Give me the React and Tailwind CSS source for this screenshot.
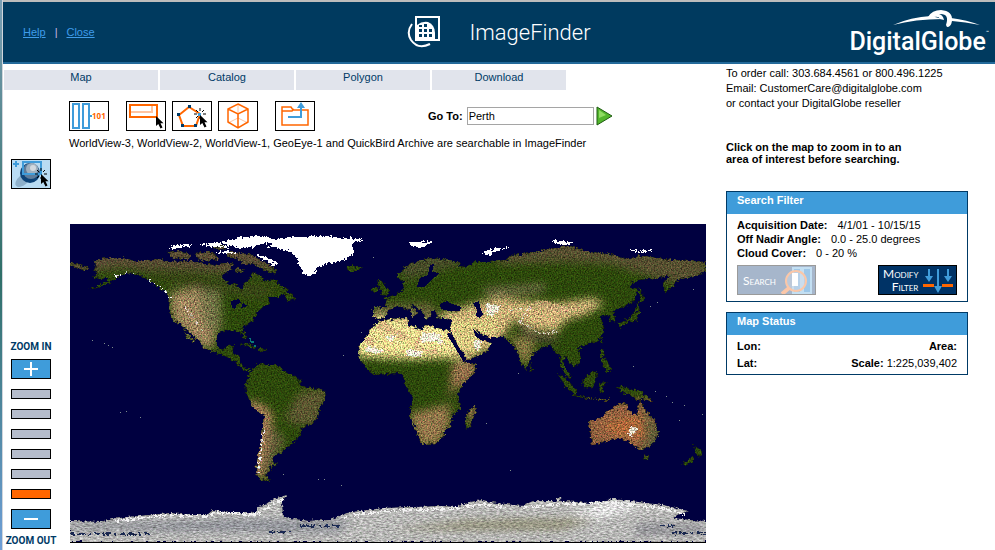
import { useState } from 'react';

const tabs = ['Map', 'Catalog', 'Polygon', 'Download'];

const LAND = {
  northAmerica:
    'M93 270L97 267L94 261L100 259L110 258L123 258L135 261L147 261L160 259L173 262L193 261L203 264L213 265L227 263L234 264L230 270L222 275L223 280L230 284L237 285L241 291L244 288L244 282L250 280L252 273L260 275L264 282L273 279L280 285L288 290L286 293L277 297L268 297L270 303L263 307L257 312L253 320L243 327L242 330L247 337L245 339L240 332L227 330L217 333L217 347L223 351L227 346L234 345L232 353L240 357L240 363L245 368L252 368L250 371L243 370L237 363L227 357L217 353L203 348L200 342L188 330L183 327L173 320L169 310L170 297L160 288L148 280L140 275L130 273L120 275L115 280L100 287L88 290L104 283L109 279L100 279L93 277L98 273Z',
  southAmerica:
    'M252 370L260 363L266 365L277 365L287 373L299 379L301 386L307 387L318 389L325 392L326 398L320 407L318 417L313 423L303 427L298 438L290 445L282 452L273 457L273 462L277 464L270 466L271 470L266 473L267 478L271 481L260 480L256 472L258 455L262 438L264 415L253 407L247 395L245 385L248 377Z',
  eurasia:
    'M373 307L385 307L387 300L384 298L395 295L403 290L404 282L398 278L398 273L406 267L413 263L430 258L447 260L462 263L457 266L466 267L474 262L490 262L507 260L512 255L533 253L545 250L557 248L570 246L587 252L600 253L613 255L625 259L643 256L670 260L706 262L706 272L690 277L677 280L674 285L665 292L663 283L672 275L657 278L637 280L628 287L638 290L633 302L623 307L612 312L616 320L612 322L608 315L600 317L603 323L604 333L597 342L585 345L577 347L581 357L580 363L573 367L568 360L565 356L563 363L567 370L572 378L567 377L561 366L560 355L555 353L552 345L543 347L532 355L530 363L525 369L520 360L516 348L510 342L503 337L490 337L482 334L477 330L476 332L480 338L491 343L487 352L467 360L463 353L452 335L450 328L453 320L437 317L436 311L432 311L431 315L427 320L422 312L413 304L410 304L418 313L412 317L412 312L403 307L395 307L388 310L387 315L380 319L373 317Z',
  africa:
    'M380 322L390 319L407 318L408 325L422 330L425 325L436 328L448 330L453 343L463 360L467 364L478 363L473 375L462 385L458 395L460 408L452 417L450 427L445 430L443 437L437 443L422 444L417 433L410 415L413 398L405 385L403 375L397 373L385 374L375 375L365 367L358 355L360 343L370 333L372 327Z',
  australia:
    'M589 422L603 417L605 413L613 408L620 403L628 404L627 410L637 415L639 405L641 400L643 408L653 418L659 432L653 445L640 450L633 445L627 440L617 438L603 442L592 445L590 428Z',
};

const ISLANDS = [
  'M475 405L476 410L470 428L465 427L467 413Z',
  'M374 287L378 287L377 292L371 291Z',
  'M377 280L382 281L385 287L390 291L389 294L380 296L382 291L379 287Z',
  'M345 267L352 266L363 268L358 271L349 271Z',
  'M644 456L649 455L648 460L645 459Z',
  'M694 445L699 449L703 451L699 457L696 454Z',
  'M693 457L695 460L685 466L682 464Z',
  'M617 386L627 388L640 391L647 396L653 402L642 399L636 400L630 395L623 393Z',
  'M582 380L590 374L597 371L596 380L592 388L584 387Z',
  'M557 373L563 376L571 384L577 391L575 394L566 387Z',
  'M574 394L583 397L597 399L610 399L609 401L589 399L574 396Z',
  'M599 383L607 382L602 386L604 392L600 393Z',
  'M601 349L604 350L603 357L608 363L612 370L607 372L604 366L601 359Z',
  'M639 287L642 293L643 300L638 303L640 312L637 320L628 322L620 327L617 324L630 318L636 311L637 303L641 299L639 293Z',
  'M530 364L533 369L531 372L529 369Z',
  'M580 347L583 347L582 350L579 350Z',
  'M602 339L603 340L602 344L600 343Z',
  'M240 344L248 343L257 348L255 349L246 346Z',
  'M259 348L267 349L266 352L259 351Z',
  'M183 328L187 334L195 341L193 342L186 336Z',
  'M285 293L291 293L295 299L289 301L286 298Z',
  'M70 262L78 265L88 267L85 270L76 268L70 266Z',
  'M168 252L178 251L192 255L188 259L172 258Z',
  'M194 253L206 252L215 254L218 259L204 261L197 258Z',
  'M213 247L222 245L226 248L217 250Z',
  'M226 252L240 253L252 255L262 261L272 266L277 272L270 273L262 268L252 263L244 264L236 258L227 257Z',
  'M235 268L244 270L241 272L235 271Z',
];

const ICE = [
  'M270 240L290 237L330 236L340 238L365 239L352 243L354 252L348 258L337 262L325 264L318 267L313 275L305 275L300 268L297 258L290 252L281 249L270 247L264 247L273 245Z',
  'M220 241L234 240L238 237L262 236L280 240L273 243L262 244L254 247L240 248L232 246L223 244Z',
  'M171 246L188 244L193 246L180 248L172 249Z',
  'M198 244L218 243L231 248L215 247Z',
  'M213 252L228 251L236 254L226 254Z',
  'M257 254L266 257L278 264L274 266L266 261L258 257Z',
  'M407 242L423 242L434 242L427 245L420 248L412 245Z',
  'M551 240L563 241L575 244L565 245L554 243Z',
  'M480 254L490 250L510 247L497 251L489 255Z',
  'M630 250L655 250L643 252L630 251Z',
];

const ANTARCTICA =
  'M70 521L100 522L113 519L127 517L150 515L170 513L190 515L207 515L213 510L230 513L250 513L257 512L257 506L265 505L270 501L277 498L288 495L282 502L283 517L307 521L330 520L347 513L360 511L383 508L413 507L443 506L455 507L470 502L483 500L490 502L505 504L522 506L533 501L555 501L558 498L562 501L590 503L613 499L637 502L663 505L688 511L678 515L673 518L690 520L706 521L706 542L70 542Z';

const SPECKS = [
  [92, 340], [104, 343], [108, 345], [112, 347], [120, 412], [126, 411], [140, 417], [361, 332],
  [373, 257], [324, 479], [341, 485], [510, 470], [283, 474], [318, 479], [655, 391], [666, 396],
  [672, 402], [679, 420], [684, 405], [702, 414], [486, 423], [518, 373], [633, 366], [693, 289],
  [650, 306], [657, 302], [343, 355],
];

function WorldMap() {
  return (
    <svg viewBox="70 224 636 319" className="block w-full cursor-crosshair" role="img" aria-label="World map" shapeRendering="crispEdges">
      <defs>
        <clipPath id="land">
          <path d={LAND.northAmerica} />
          <path d={LAND.southAmerica} />
          <path d={LAND.eurasia} />
          <path d={LAND.africa} />
          <path d={LAND.australia} />
          {ISLANDS.map((d) => <path key={d} d={d} />)}
        </clipPath>
        <clipPath id="pole">
          <path d={ANTARCTICA} />
        </clipPath>
        <filter id="soft" x="-30%" y="-30%" width="160%" height="160%">
          <feGaussianBlur stdDeviation="4" />
        </filter>
        {/* ragged coast plus per pixel grain */}
        <filter id="grain" filterUnits="userSpaceOnUse" x="70" y="224" width="636" height="319" colorInterpolationFilters="sRGB">
          <feTurbulence type="fractalNoise" baseFrequency="0.35" numOctaves="2" seed="4" result="coast" />
          <feDisplacementMap in="SourceGraphic" in2="coast" scale="6" xChannelSelector="R" yChannelSelector="G" result="shape" />
          <feTurbulence type="fractalNoise" baseFrequency="0.7" numOctaves="3" seed="9" />
          <feColorMatrix values="1 0.5 0 0 -0.25  1 0 0.5 0 -0.25  1 0.3 0.2 0 -0.25  0 0 0 0 1" result="noise" />
          <feComposite in="shape" in2="noise" operator="arithmetic" k1="1.3" k2="0.3" k3="0" k4="0" />
        </filter>
        <filter id="snow" filterUnits="userSpaceOnUse" x="70" y="224" width="636" height="319" colorInterpolationFilters="sRGB">
          <feTurbulence type="fractalNoise" baseFrequency="0.35" numOctaves="2" seed="4" result="coast" />
          <feDisplacementMap in="SourceGraphic" in2="coast" scale="5" xChannelSelector="R" yChannelSelector="G" result="shape" />
          <feTurbulence type="fractalNoise" baseFrequency="0.3 0.7" numOctaves="3" seed="7" />
          <feColorMatrix values="0.9 0.1 0 0 0  0.9 0 0.1 0 0  0.9 0.1 0 0 0  0 0 0 0 1" result="noise" />
          <feComposite in="shape" in2="noise" operator="arithmetic" k1="0.9" k2="0.46" k3="0" k4="0" />
        </filter>
        <filter id="frost" filterUnits="userSpaceOnUse" x="70" y="224" width="636" height="319" colorInterpolationFilters="sRGB">
          <feTurbulence type="fractalNoise" baseFrequency="0.4" numOctaves="2" seed="2" result="coast" />
          <feDisplacementMap in="SourceGraphic" in2="coast" scale="6" xChannelSelector="R" yChannelSelector="G" />
        </filter>
      </defs>

      <rect x="70" y="224" width="636" height="319" fill="#000040" />

      <g filter="url(#grain)">
        <g clipPath="url(#land)">
          <rect x="70" y="224" width="636" height="300" fill="#2f4c0c" />
          <g filter="url(#soft)">
            <path d="M70 240H290V268L230 274L180 270L120 268L70 275Z" fill="#5b5034" />
            <path d="M120 268L170 272L230 280L280 285L260 300L200 290L150 278Z" fill="#3b4a14" />
            <path d="M170 292L200 288L212 300L216 330L212 350L196 344L172 318Z" fill="#a48b60" />
            <path d="M198 290L220 292L222 330L206 330Z" fill="#77774a" />
            <path d="M247 400L262 404L273 415L270 445L262 480L250 470Z" fill="#a98258" />
            <path d="M270 425L285 440L275 460L268 480L262 470Z" fill="#66603a" />
            <path d="M300 392L328 388L318 425L296 425L284 418Z" fill="#5f5a30" />
            <path d="M395 255L460 252L470 262L440 270L405 280Z" fill="#4c4f2a" />
            <path d="M480 240L706 240V290L660 280L610 264L560 262L500 264Z" fill="#5a5230" />
            <path d="M372 306L400 304L430 303L440 318L375 320Z" fill="#696539" />
            <path d="M480 288L545 284L545 292L490 298Z" fill="#6e6c44" />
            <path d="M440 314L480 302L500 298L550 304L594 298L604 304L586 314L566 320L556 332L530 328L515 318L496 346L460 362L445 330Z" fill="#d6b87c" />
            <path d="M450 318L470 320L500 316L492 335L470 356L455 335Z" fill="#e3d084" />
            <path d="M514 320L535 332L562 338L548 344L525 337Z" fill="#4d4a34" />
            <path d="M510 335L535 340L532 355L526 368L515 350Z" fill="#8a7b45" />
            <path d="M365 316L450 322L462 350L455 358L400 359L356 356L354 340Z" fill="#f8e494" />
            <path d="M450 365L480 358L472 380L455 388L448 400L452 372Z" fill="#9c7650" />
            <path d="M408 414L450 404L450 425L438 444L420 446Z" fill="#987a4e" />
            <path d="M584 400L665 400L660 455L585 450Z" fill="#946340" />
            <path d="M600 425L640 415L644 438L620 436Z" fill="#b9703c" />
            <path d="M640 400L660 425L662 450L640 455L646 430Z" fill="#66603a" />
            <path d="M462 400L480 400L472 430Z" fill="#8f6f48" />
          </g>
          <g fill="#ddb285" opacity="0.6">
            <path d="M374 326L386 322L392 328L402 330L410 338L400 340L390 334L378 332Z" />
            <path d="M415 340L422 336L420 346L430 350L438 348L436 356L424 352L414 348Z" />
            <path d="M364 338L372 336L376 344L366 344Z" />
            <path d="M530 304L544 300L560 306L575 308L566 314L548 310Z" />
          </g>
          <g fill="#fffbe8" opacity="0.85">
            <path d="M422 332L440 334L444 344L432 341L420 343Z" />
            <path d="M408 350L424 351L420 357L404 356Z" />
            <path d="M368 346L384 350L378 354L364 352Z" />
            <path d="M472 340L482 341L478 352Z" />
            <path d="M486 304L500 306L494 316L488 315Z" />
            <path d="M386 336L398 335L390 342Z" />
            <path d="M632 426L637 428L632 437L627 434Z" />
          </g>
          <g fill="none" stroke="#fff" strokeWidth="2" strokeDasharray="3 2 1 3">
            <path d="M115 276L130 273L148 280L166 292L170 298" />
            <path d="M510 310L530 308L520 322L540 333L560 332" opacity="0.6" />
            <path d="M264 430L260 455L258 475" />
            <path d="M185 306L190 314L202 330" opacity="0.6" />
          </g>
        </g>
      </g>

      <g fill="#000040">
        <path d="M440 304L447 301L452 304L461 307L460 311L449 311L441 309Z" />
        <path d="M473 303L479 301L480 307L483 314L480 318L476 316L477 310Z" />
        <path d="M420 278L428 275L430 265L434 264L432 272L440 273L430 281L424 287L417 287Z" />
        <path d="M231 301L239 299L241 303L237 304L235 309L232 308ZM243 303L248 306L241 308Z" />
        <path d="M449 332L466 359L463 361L447 334Z" />
        <path d="M473 329L480 336L486 339L483 341L476 337Z" />
      </g>

      <g filter="url(#frost)">
        {ICE.map((d) => <path key={d} d={d} fill="#fff" />)}
      </g>

      <g filter="url(#snow)">
        <g clipPath="url(#pole)">
          <rect x="70" y="490" width="636" height="53" fill="#cacac8" />
          <g filter="url(#soft)">
            <path d="M70 524L230 520L350 520L340 532L70 530Z" fill="#9a9ca4" />
            <path d="M390 530L470 520L600 518L560 530Z" fill="#a09e84" />
            <path d="M570 514L610 502L650 504L600 518Z" fill="#ffffff" />
            <path d="M640 524L706 526V534L630 534Z" fill="#9a9aa0" />
          </g>
          <path d="M70 534H150M270 532H290M300 526H340M660 526H675M672 533H706" stroke="#1c2c58" strokeWidth="2" strokeDasharray="5 2 9 3 2 4" />
        </g>
      </g>
      <g filter="url(#frost)" fill="none" stroke="#f4f4f4" strokeWidth="2" strokeDasharray="4 3 7 2">
        <path d="M115 521L170 515L207 517L215 513L258 514L270 506L284 499" />
        <path d="M345 517L383 511L450 509L483 504L505 507" />
        <path d="M524 508L560 504L613 503L660 508L685 514" />
      </g>
      <g fill="#7c8a8a">
        {SPECKS.map(([x, y]) => <rect key={`${x}-${y}`} x={x} y={y} width="1" height="1" />)}
      </g>
      <path d="M249 338h2v3h3v2h-3zM254 345h2v2h-2z" fill="#087878" />
      <rect x="70" y="542" width="636" height="1" fill="#000" />
    </svg>
  );
}

function Cursor({ x, y }) {
  return (
    <path
      transform={`translate(${x} ${y})`}
      d="M0 0V10L2.300 8L4.500 12.500L6.500 11.500L4.500 7.200H7.500Z"
      fill="#000"
    />
  );
}

function Sparks({ x, y }) {
  return (
    <path
      transform={`translate(${x} ${y})`}
      d="M0-6V-3M-6 0H-3M3 0H6M-4-4L-2-2M4-4L2-2M-4 4L-2 2M0 3V5"
      stroke="#000"
      strokeWidth="1"
    />
  );
}

function ToolButton({ label, className = '', children }) {
  return (
    <button type="button" aria-label={label} title={label} className={`h-[30px] w-10 shrink-0 border border-black ${className}`}>
      <svg viewBox="1 1 38 28" className="block h-full w-full" fill="none">
        {children}
      </svg>
    </button>
  );
}

function Toolbar() {
  return (
    <div className="flex items-center">
      <ToolButton label="WorldView 101" className="mr-[17px]">
        <path d="M4 3H10V27H4ZM14 3H20V27H14Z" stroke="#3f9cda" strokeWidth="2" />
        <path d="M20 15H23" stroke="#3f9cda" strokeWidth="2" />
        <text x="23" y="18" fill="#f60" fontSize="8" fontWeight="700" fontFamily="Open Sans">101</text>
      </ToolButton>
      <ToolButton label="Draw rectangle" className="mr-1.5">
        <path d="M5 11H26V5" stroke="#ffc4a0" strokeWidth="2" />
        <path d="M4 4H31V16H4Z" stroke="#f60" strokeWidth="2" />
        <Cursor x={30} y={15} />
      </ToolButton>
      <ToolButton label="Draw polygon" className="mr-1.5">
        <path d="M17 6L28 13L24 25H11L7 14Z" stroke="#f60" strokeWidth="2" />
        <path d="M16 4h3v3h-3zM5 12h3v3H5zM9 23h3v3H9zM22 23h3v3h-3z" fill="#003a66" />
        <path d="M26 12h3v3h-3z" fill="#3f9cda" />
        <Sparks x={28} y={13} />
        <Cursor x={28} y={14} />
      </ToolButton>
      <ToolButton label="3D view" className="mr-[17px]">
        <path d="M20 3V18M10 22L20 17L30 22" stroke="#ffc4a0" strokeWidth="1" />
        <path d="M20 3L30 8V21L20 27L10 21V8ZM10 8L20 13L30 8M20 13V27" stroke="#f60" strokeWidth="1.500" />
      </ToolButton>
      <ToolButton label="Open file">
        <path d="M7 24V6H16L18 9H33V24ZM7 10H17L19 8" stroke="#f60" strokeWidth="1.500" />
        <path d="M13 16H26V7" stroke="#3f9cda" strokeWidth="2" />
        <path d="M22 7L26 1L30 7Z" fill="#3f9cda" />
      </ToolButton>
    </div>
  );
}

function ZoomControl() {
  const [level, setLevel] = useState(5);

  return (
    <div className="flex flex-col items-center font-['Roboto'] text-[10px] leading-3 font-bold text-[#003a66]">
      <span>ZOOM IN</span>
      <button
        type="button"
        aria-label="Zoom in"
        onClick={() => setLevel(Math.max(0, level - 1))}
        className="mt-1.5 flex h-5 w-10 items-center justify-center border border-black bg-[#3f9cda]"
      >
        <svg viewBox="0 0 14 14" className="h-3.5 w-3.5"><path d="M7 0V14M0 7H14" stroke="#fff" strokeWidth="2" /></svg>
      </button>
      {[0, 1, 2, 3, 4, 5].map((n) => (
        <button
          key={n}
          type="button"
          aria-label={`Zoom level ${6 - n}`}
          onClick={() => setLevel(n)}
          className={`mt-2.5 h-2.5 w-10 border border-black ${n === level ? 'bg-[#ff6600]' : 'bg-[#b5bccb]'}`}
        />
      ))}
      <button
        type="button"
        aria-label="Zoom out"
        onClick={() => setLevel(Math.min(5, level + 1))}
        className="mt-2.5 flex h-5 w-10 items-center justify-center border border-black bg-[#3f9cda]"
      >
        <svg viewBox="0 0 14 14" className="h-3.5 w-3.5"><path d="M0 7H14" stroke="#fff" strokeWidth="2" /></svg>
      </button>
      <span className="mt-1.5 whitespace-nowrap">ZOOM OUT</span>
    </div>
  );
}

function Header() {
  return (
    <header className="grid h-[62px] grid-cols-3 items-center border-b-2 border-[#236a9a] bg-[#003a5f] text-[11px] text-white">
      <nav className="flex gap-[9px] pl-5 text-[#3f9cea]">
        <a href="#help" className="underline">Help</a>
        <span className="text-[#c9b8e8]">|</span>
        <a href="#close" className="underline">Close</a>
      </nav>
      <div className="flex items-center justify-center gap-7">
        <svg viewBox="0 0 34 34" className="h-[34px] w-[34px]" fill="none" stroke="#fff">
          <path d="M9 2H32V25H9Z" strokeWidth="2" />
          <path d="M10 10Q15 6 21 7Q28 10 28 18V25H10Z" fill="#fff" stroke="none" />
          <path d="M12 10h3v2h-3zM17 9h3v3h-3zM12 14h3v3h-3zM17 14h3v3h-3zM22 14h3v3h-3zM12 19h3v3h-3zM17 19h3v3h-3zM22 19h3v3h-3z" fill="#003a5f" stroke="none" />
          <path d="M5 9Q-1 17 4 25Q11 35 23 29" strokeWidth="2" />
        </svg>
        <span className="font-['Roboto'] text-[22px] font-light">ImageFinder</span>
      </div>
      <div className="flex justify-end pr-1.5">
        <div className="relative pt-5 font-['Roboto'] text-[25px] leading-8 font-medium">
          <svg viewBox="0 0 88 20" className="absolute top-1 right-2 h-5 w-[88px]" fill="#fff">
            <path d="M0 15Q18 7 38 6L50 9Q22 9 0 15ZM58 8Q74 10 87 15Q72 12 59 11Z" />
            <path d="M35 7Q39 0 48 0Q60 1 59 11Q58 17 54 17L53 15Q57 3 46 4Q50 5 51 10L47 9Q46 6 41 7Z" />
          </svg>
          DigitalGlobe<sup className="-top-4 text-[5px]">™</sup>
        </div>
      </div>
    </header>
  );
}

function Panel({ title, children }) {
  return (
    <section className="border border-[#003a66] bg-white">
      <h2 className="h-[22px] bg-[#3f9cda] px-2.5 leading-[17px] font-bold text-white">{title}</h2>
      {children}
    </section>
  );
}

function Sidebar() {
  return (
    <aside className="w-[242px] shrink-0">
      <p className="pt-0.5 leading-[15px]">
        To order call: 303.684.4561 or 800.496.1225
        <br />
        Email: CustomerCare@digitalglobe.com
        <br />
        or contact your DigitalGlobe reseller
      </p>
      <p className="mt-[30px] mb-[26px] leading-3 font-bold">
        Click on the map to zoom in to an
        <br />
        area of interest before searching.
      </p>

      <Panel title="Search Filter">
        <dl className="px-2.5 pt-1 leading-[14px]">
          <div className="flex gap-2.5"><dt className="font-bold">Acquisition Date:</dt><dd>4/1/01 - 10/15/15</dd></div>
          <div className="flex gap-2.5"><dt className="font-bold">Off Nadir Angle:</dt><dd>0.0 - 25.0 degrees</dd></div>
          <div className="flex gap-2.5"><dt className="font-bold">Cloud Cover:</dt><dd>0 - 20 %</dd></div>
        </dl>
        <div className="flex justify-between px-2.5 pt-[5px] pb-1.5 font-['Lato'] text-[12px] leading-[13px] text-white">
          <button type="button" disabled className="relative flex h-[30px] w-[79px] items-center border border-[#9a9a9a] bg-[#a6b6cb] pl-[5px] [font-variant:small-caps]">
            <svg viewBox="0 0 36 28" className="absolute top-0 right-0 h-7 w-9" fill="none">
              <path d="M14 2H22V27H14ZM24 2H32V27H24Z" fill="#9dc7e8" stroke="#c3dff2" strokeWidth="2" />
              <circle cx="17" cy="15" r="10" fill="#d3dce8" fillOpacity="0.5" stroke="#fbc7a8" strokeWidth="2" />
              <path d="M13 7H19V20H13Z" fill="#fff" />
              <path d="M10 22L3 28" stroke="#fbc7a8" strokeWidth="4" />
            </svg>
            Search
          </button>
          <button type="button" className="flex h-[30px] w-[79px] items-center justify-between border border-black bg-[#003366] pr-[3px] pl-1 text-right [font-variant:small-caps]">
            <span className="flex flex-col"><span>Modify</span><span>Filter</span></span>
            <svg viewBox="0 0 30 28" className="h-7 w-[30px] shrink-0" fill="none">
              <path d="M6 3V12M15 3V22M25 3V12" stroke="#3f9cda" strokeWidth="2" />
              <path d="M2 10H10L6 16ZM11 20H19L15 27ZM21 10H29L25 16Z" fill="#3f9cda" />
              <path d="M0 18H11V21H0ZM19 18H30V21H19Z" fill="#f60" />
            </svg>
          </button>
        </div>
      </Panel>

      <div className="mt-2.5">
        <Panel title="Map Status">
          <dl className="grid grid-cols-2 px-2.5 pt-[3px] pb-0.5 leading-[17px]">
            <dt className="font-bold">Lon:</dt>
            <dt className="text-right font-bold">Area:</dt>
            <dt className="font-bold">Lat:</dt>
            <dd className="text-right"><b>Scale:</b> 1:225,039,402</dd>
          </dl>
        </Panel>
      </div>
    </aside>
  );
}

export default function App() {
  const [place, setPlace] = useState('Perth');

  return (
    <div className="flex min-h-screen bg-white font-['Liberation_Sans',Arial,sans-serif] text-[11px] text-black">
      <div className="w-[3px] shrink-0 border-r border-gray-300 bg-linear-to-b from-[#7a9fb5] via-[#2f6f68] to-[#6f9fd8]" />
      <div className="min-w-0 flex-1 border-t-2 border-[#bcbcbc]">
        <Header />
        <div className="flex gap-5 pr-[27px]">
          <main className="min-w-0 flex-1">
            <nav className="mt-1.5 flex gap-0.5 pl-px text-center text-[#003a66]">
              {tabs.map((tab) => (
                <a
                  key={tab}
                  href={`#${tab.toLowerCase()}`}
                  className={`h-5 bg-[#e1e4ec] leading-[15px] ${tab === 'Map' ? 'w-[154px]' : 'w-[134px]'}`}
                >
                  {tab}
                </a>
              ))}
            </nav>

            <div className="mt-[11px] flex items-center pl-[66px]">
              <Toolbar />
              <form className="ml-[113px] flex items-center" onSubmit={(e) => e.preventDefault()}>
                <label htmlFor="goto" className="mr-1 font-bold">Go To:</label>
                <input
                  id="goto"
                  type="text"
                  value={place}
                  onChange={(e) => setPlace(e.target.value)}
                  className="h-[18px] w-[127px] border border-[#a5a5a5] px-px"
                />
                <button type="submit" aria-label="Go" className="ml-0.5">
                  <svg viewBox="0 0 17 20" className="h-5 w-[17px]">
                    <path d="M1 1L16 10L1 19Z" fill="#52b52c" stroke="#1f5c12" strokeWidth="1" strokeLinejoin="round" />
                    <path d="M3 4L10 9L3 12Z" fill="#8fdc62" />
                  </svg>
                </button>
              </form>
            </div>
            <p className="mt-1 pl-[66px] leading-4">
              WorldView-3, WorldView-2, WorldView-1, GeoEye-1 and QuickBird Archive are searchable in ImageFinder
            </p>

            <div className="mt-2 flex gap-[11px]">
              <div className="flex w-14 shrink-0 flex-col items-center gap-[152px]">
                <ToolButton label="Zoom to area" className="bg-[#b9dcf3]">
                  <ellipse cx="12" cy="21" rx="9" ry="5" fill="#8eb0ca" transform="rotate(-40 12 21)" />
                  <circle cx="19" cy="14" r="10" fill="#0d4377" />
                  <circle cx="20" cy="12" r="8" fill="#5d7c9b" />
                  <circle cx="21" cy="10" r="6" fill="#9fb0bf" />
                  <circle cx="22" cy="9" r="3" fill="#d2d9df" />
                  <path d="M12 3H30V15H12Z" stroke="#3f9cda" strokeWidth="2" />
                  <path d="M2 5H8M5 2V8" stroke="#3f9cda" strokeWidth="2" />
                  <Sparks x={30} y={15} />
                  <Cursor x={30} y={15} />
                </ToolButton>
                <ZoomControl />
              </div>
              <div className="min-w-0 flex-1 pt-[65px]">
                <WorldMap />
              </div>
            </div>
          </main>
          <Sidebar />
        </div>
      </div>
    </div>
  );
}
